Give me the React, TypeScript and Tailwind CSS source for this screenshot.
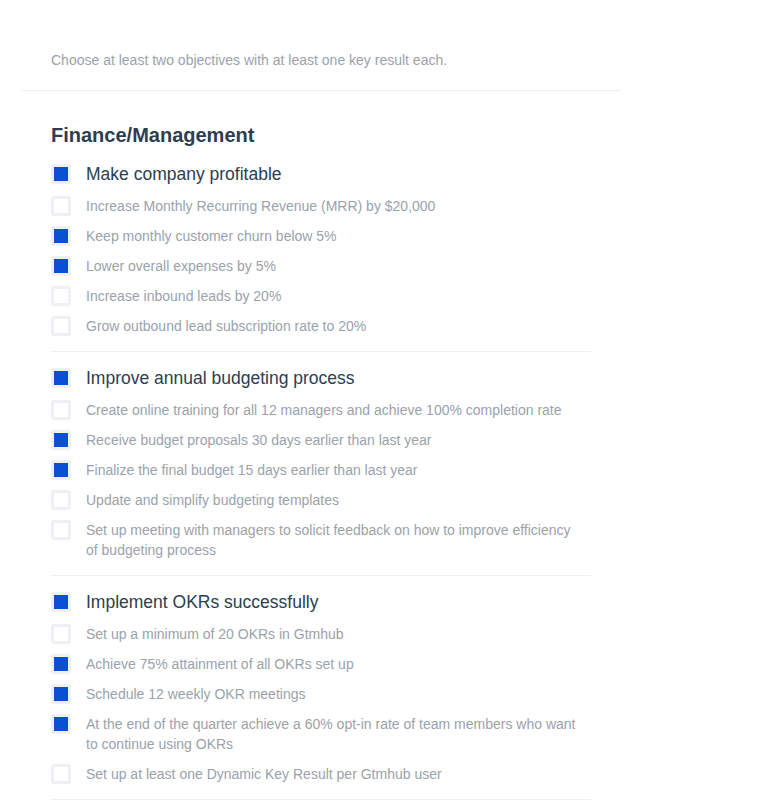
import { Fragment } from 'react';

interface KeyResult {
  title: string;
  checked: boolean;
}

interface Objective {
  title: string;
  checked: boolean;
  keyResults: KeyResult[];
}

const objectives: Objective[] = [
  {
    title: 'Make company profitable',
    checked: true,
    keyResults: [
      { title: 'Increase Monthly Recurring Revenue (MRR) by $20,000', checked: false },
      { title: 'Keep monthly customer churn below 5%', checked: true },
      { title: 'Lower overall expenses by 5%', checked: true },
      { title: 'Increase inbound leads by 20%', checked: false },
      { title: 'Grow outbound lead subscription rate to 20%', checked: false },
    ],
  },
  {
    title: 'Improve annual budgeting process',
    checked: true,
    keyResults: [
      { title: 'Create online training for all 12 managers and achieve 100% completion rate', checked: false },
      { title: 'Receive budget proposals 30 days earlier than last year', checked: true },
      { title: 'Finalize the final budget 15 days earlier than last year', checked: true },
      { title: 'Update and simplify budgeting templates', checked: false },
      {
        title: 'Set up meeting with managers to solicit feedback on how to improve efficiency of budgeting process',
        checked: false,
      },
    ],
  },
  {
    title: 'Implement OKRs successfully',
    checked: true,
    keyResults: [
      { title: 'Set up a minimum of 20 OKRs in Gtmhub', checked: false },
      { title: 'Achieve 75% attainment of all OKRs set up', checked: true },
      { title: 'Schedule 12 weekly OKR meetings', checked: true },
      {
        title: 'At the end of the quarter achieve a 60% opt-in rate of team members who want to continue using OKRs',
        checked: true,
      },
      { title: 'Set up at least one Dynamic Key Result per Gtmhub user', checked: false },
    ],
  },
];

function Checkbox({ checked }: { checked: boolean }) {
  return (
    <div className="w-5 h-5 flex-shrink-0 rounded-[3px] border-[3px] border-[#eef0f4] bg-white">
      {checked && <div className="w-full h-full bg-[#0a50d0]" />}
    </div>
  );
}

function App() {
  return (
    <div className="min-h-screen bg-white" style={{ fontFamily: '"Liberation Sans", Arial, sans-serif' }}>
      <div className="ml-[21px] w-[600px]">
        {/* Intro */}
        <div className="px-[30px] pt-[50px] pb-[20px] border-b border-[#eeeff1]">
          <p className="text-[14px] leading-5 text-[#9aa2ab]">
            Choose at least two objectives with at least one key result each.
          </p>
        </div>

        {/* Category */}
        <div className="px-[30px] pt-[32px]">
          <h2 className="text-[20px] leading-6 font-bold text-[#2c3e50] mb-[1px]">Finance/Management</h2>

          {objectives.map((obj, i) => (
            <Fragment key={i}>
              <div className="pt-[14px] pb-[15px] border-b border-[#eeeff1]">
                <div className="flex items-center gap-[15px] h-6">
                  <Checkbox checked={obj.checked} />
                  <span className="text-[17.5px] leading-6 text-[#2c3e50]">{obj.title}</span>
                </div>
                <div className="mt-[10px] flex flex-col gap-[10px]">
                  {obj.keyResults.map((kr, j) => (
                    <div key={j} className="flex items-start gap-[15px]">
                      <Checkbox checked={kr.checked} />
                      <span className="text-[14px] leading-5 text-[#9aa2ab] pr-[6px]">{kr.title}</span>
                    </div>
                  ))}
                </div>
              </div>
            </Fragment>
          ))}
        </div>
      </div>
    </div>
  );
}

export default App;
